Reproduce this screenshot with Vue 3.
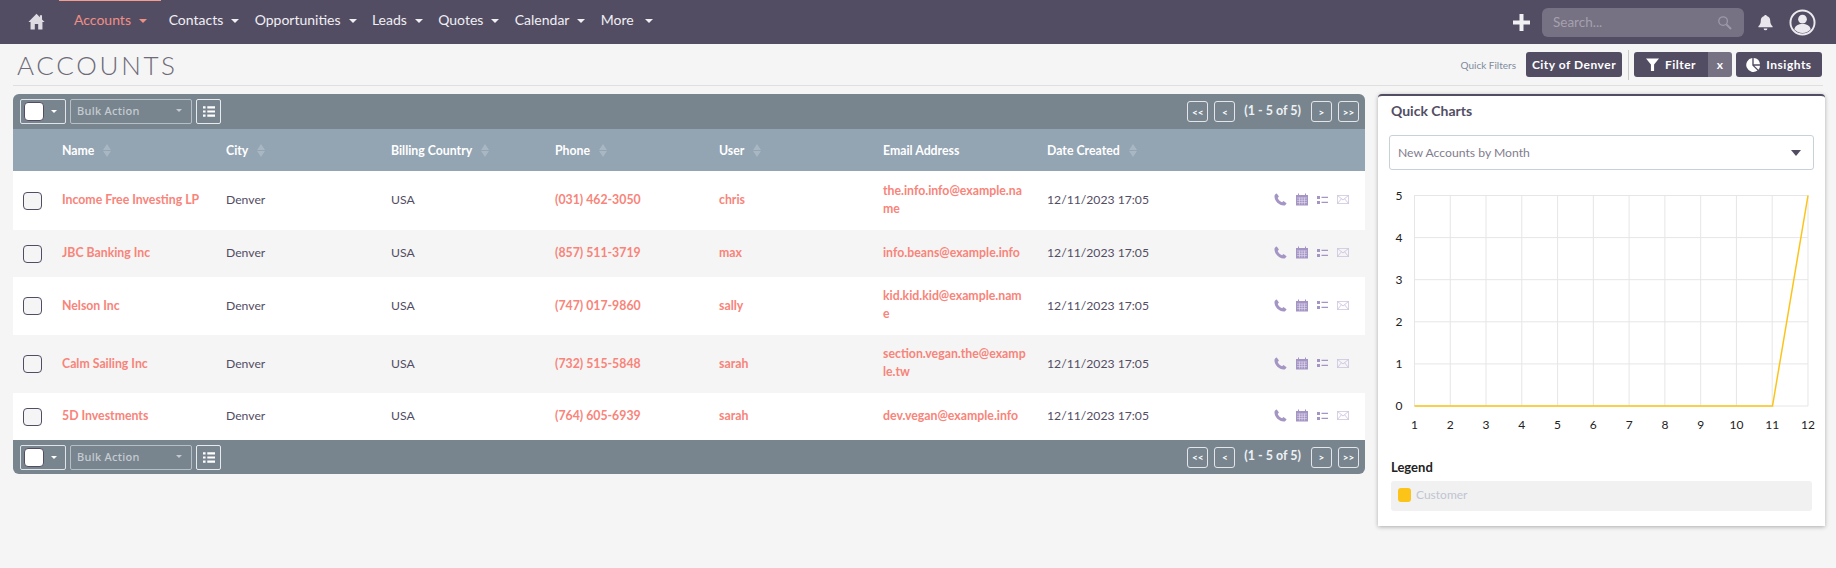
<template>
  <div class="page">
    <nav class="topnav">
      <svg class="home" viewBox="0 0 20 20" width="17" height="17"><path d="M10 1 L14 5 V2.500 H16.500 V7.500 L19.500 10.500 H17 V19.500 H12 V13 H8 V19.500 H3 V10.500 H.5 Z" fill="#dedce2" /></svg>
      <ul class="menu">
        <li v-for="m in menu" :key="m" :class="{ active: m === 'Accounts' }">{{ m }}<i class="caret"></i></li>
      </ul>
      <div class="nav-right">
        <svg viewBox="0 0 17 17" width="17" height="17"><path d="M6.500 0h4v6.500H17v4h-6.500V17h-4v-6.500H0v-4h6.500z" fill="#f0eff2" /></svg>
        <div class="search">
          <span>Search...</span>
          <svg viewBox="0 0 16 16" width="15" height="15"><circle cx="6.500" cy="6.500" r="4.600" fill="none" stroke="#9d99a8" stroke-width="1.400" /><path d="M10 10l5 5" stroke="#9d99a8" stroke-width="2.200" /></svg>
        </div>
        <svg class="bell" viewBox="0 0 18 18" width="17" height="18"><path d="M9 1.500c.8 0 1.300.5 1.400 1.200 2.500.6 3.600 2.600 3.600 5 0 3 1 4.300 2.500 5.800v1H1.500v-1C3 12 4 10.700 4 7.700c0-2.400 1.100-4.400 3.600-5 .1-.7.600-1.200 1.400-1.200zM7 15.800h4a2 2 0 0 1-4 0z" fill="#e8e6ea" /></svg>
        <svg viewBox="0 0 28 28" width="27" height="27"><circle cx="14" cy="14" r="12.500" fill="none" stroke="#eceaee" stroke-width="2" /><circle cx="14" cy="10.500" r="4.500" fill="#eceaee" /><path d="M5.500 21c1-4 4-5.500 8.500-5.500s7.500 1.500 8.500 5.500c-2 2.500-5 4-8.500 4s-6.500-1.500-8.500-4z" fill="#eceaee" /></svg>
      </div>
    </nav>

    <header class="page-head">
      <h1>ACCOUNTS</h1>
      <div class="head-actions">
        <span class="qf-label">Quick Filters</span>
        <button class="dark-btn city">City of Denver</button>
        <span class="vsep"></span>
        <button class="dark-btn filter">
          <svg viewBox="0 0 14 14" width="13" height="13"><path d="M0 .5h14L8.700 7v7H5.300V7z" fill="#fff" /></svg>Filter
        </button>
        <button class="x-btn">x</button>
        <button class="dark-btn insights">
          <svg viewBox="0 0 14 14" width="14" height="14"><path d="M6.300 0v7.400l5.200 5.100A7 7 0 1 1 6.300 0z" fill="#fff" /><path d="M7.700 0A7 7 0 0 1 14 6.300H7.700z" fill="#fff" /><path d="M8.300 7.700H14a7 7 0 0 1-1.500 4.100z" fill="#fff" /></svg>Insights
        </button>
      </div>
    </header>

    <div class="content">
      <section class="list">
        <div class="toolbar top">
          <div class="sel-box"><span class="check-white"></span><i class="caret small"></i></div>
          <div class="bulk">Bulk Action<i class="caret small dim"></i></div>
          <div class="list-btn">
            <svg viewBox="0 0 14 12" width="12" height="11"><path d="M0 0h3v2.600H0zM5 0h9v2.600H5zM0 4.700h3v2.600H0zM5 4.700h9v2.600H5zM0 9.400h3V12H0zM5 9.400h9V12H5z" fill="#fff" /></svg>
          </div>
          <div class="pager">
            <span class="pg">&lt;&lt;</span><span class="pg">&lt;</span>
            <span class="count">(1 - 5 of 5)</span>
            <span class="pg">&gt;</span><span class="pg">&gt;&gt;</span>
          </div>
        </div>

        <table>
          <thead>
            <tr>
              <th class="c-check"></th>
              <th v-for="c in columns" :key="c.label">
                {{ c.label }}
                <span v-if="c.sort" class="sort"><i></i><i></i></span>
              </th>
              <th class="c-icons"></th>
            </tr>
          </thead>
          <tbody>
            <tr v-for="r in rows" :key="r.name" :style="{ height: r.h + 'px' }">
              <td class="c-check"><span class="check"></span></td>
              <td class="link">{{ r.name }}</td>
              <td>Denver</td>
              <td>USA</td>
              <td class="link">{{ r.phone }}</td>
              <td class="link">{{ r.user }}</td>
              <td class="link email">{{ r.email }}</td>
              <td>12/11/2023 17:05</td>
              <td class="c-icons">
                <div class="row-icons">
                  <svg viewBox="0 0 14 14" width="13" height="13"><path d="M3 .5l2.300 3.300-1.300 1.500c.6 1.900 2.500 3.900 4.700 4.700l1.500-1.300 3.300 2.300c-.3 1.300-1.500 2.500-3 2.500C5.500 13.500.5 8.500.5 3.500.5 2 1.700.8 3 .5z" fill="#a595c4" /></svg>
                  <svg viewBox="0 0 12 12" width="12" height="13"><path d="M0 1.500h2V0h1v1.500h6V0h1v1.500h2V12H0z" fill="#a595c4" /><path d="M1 4.500h10M1 6.800h10M1 9.100h10M3.500 4v7M6 4v7M8.500 4v7" stroke="#e4dff0" stroke-width=".6" /></svg>
                  <svg viewBox="0 0 11 8" width="11" height="8"><path d="M0 0h3v3H0zM0 5h3v3H0z" fill="#a595c4" /><path d="M4.500.8H11v1.200H4.500zM4.500 5.800H11v1.200H4.500z" fill="#a595c4" /></svg>
                  <svg viewBox="0 0 12 9" width="12" height="9"><path d="M.4.4h11.200v8.200H.4zM.4.4L6 5l5.600-4.600M.4 8.600l4-4.800M11.600 8.600l-4-4.800" fill="none" stroke="#c8bedd" stroke-width=".8" /></svg>
                </div>
              </td>
            </tr>
          </tbody>
        </table>

        <div class="toolbar bottom">
          <div class="sel-box"><span class="check-white"></span><i class="caret small"></i></div>
          <div class="bulk">Bulk Action<i class="caret small dim"></i></div>
          <div class="list-btn">
            <svg viewBox="0 0 14 12" width="12" height="11"><path d="M0 0h3v2.600H0zM5 0h9v2.600H5zM0 4.700h3v2.600H0zM5 4.700h9v2.600H5zM0 9.400h3V12H0zM5 9.400h9V12H5z" fill="#fff" /></svg>
          </div>
          <div class="pager">
            <span class="pg">&lt;&lt;</span><span class="pg">&lt;</span>
            <span class="count">(1 - 5 of 5)</span>
            <span class="pg">&gt;</span><span class="pg">&gt;&gt;</span>
          </div>
        </div>
      </section>

      <aside class="charts">
        <h3>Quick Charts</h3>
        <div class="chart-select">New Accounts by Month<i class="sel-caret"></i></div>
        <svg class="chart" viewBox="0 0 447 250" width="447" height="250">
          <g stroke="#e6e6e6" stroke-width="1">
            <line v-for="x in gridX" :key="'x' + x" :x1="x" :x2="x" y1="25" y2="236" />
            <line v-for="y in gridY" :key="'y' + y" x1="36.500" x2="430" :y1="y" :y2="y" />
          </g>
          <text v-for="(y, i) in gridY" :key="'l' + y" x="24.500" :y="y + 4" class="tick" text-anchor="end">{{ 5 - i }}</text>
          <text v-for="(x, i) in gridX" :key="'n' + x" :x="x" y="259" class="tick" text-anchor="middle">{{ i + 1 }}</text>
          <polyline fill="none" stroke="#fcc419" stroke-width="1.500" points="36.500,236 394.500,236 430,25.500" />
        </svg>
        <h4>Legend</h4>
        <div class="legend"><span class="swatch"></span><span>Customer</span></div>
      </aside>
    </div>
  </div>
</template>

<script setup>
const menu = ['Accounts', 'Contacts', 'Opportunities', 'Leads', 'Quotes', 'Calendar', 'More']

const columns = [
  { label: 'Name', sort: true },
  { label: 'City', sort: true },
  { label: 'Billing Country', sort: true },
  { label: 'Phone', sort: true },
  { label: 'User', sort: true },
  { label: 'Email Address', sort: false },
  { label: 'Date Created', sort: true }
]

const rows = [
  { name: 'Income Free Investing LP', phone: '(031) 462-3050', user: 'chris', email: 'the.info.info@example.name', h: 59 },
  { name: 'JBC Banking Inc', phone: '(857) 511-3719', user: 'max', email: 'info.beans@example.info', h: 47 },
  { name: 'Nelson Inc', phone: '(747) 017-9860', user: 'sally', email: 'kid.kid.kid@example.name', h: 58 },
  { name: 'Calm Sailing Inc', phone: '(732) 515-5848', user: 'sarah', email: 'section.vegan.the@example.tw', h: 58 },
  { name: '5D Investments', phone: '(764) 605-6939', user: 'sarah', email: 'dev.vegan@example.info', h: 47 }
]

const gridX = Array.from({ length: 12 }, (_, i) => 36.5 + i * 35.77)
const gridY = Array.from({ length: 6 }, (_, i) => 25.5 + i * 42.1)
</script>

<style>
body {
  margin: 0;
  background: #f5f5f5;
}
</style>

<style scoped>
.page {
  font-family: Lato, "Liberation Sans", sans-serif;
  height: 568px;
  overflow: hidden;
  background: #f5f5f5;
  color: #534d64;
}

.topnav {
  height: 44px;
  background: #534d64;
  display: flex;
  align-items: center;
  padding: 0 20px 0 28px;
}

.home {
  margin-right: 14px;
  margin-top: -1px;
}

.menu {
  display: flex;
  list-style: none;
  margin: 0;
  padding: 0;
  height: 44px;
}

.menu li {
  color: #f0eff3;
  font-size: 14px;
  padding: 0 7.7px;
  height: 44px;
  line-height: 38px;
  box-sizing: border-box;
  white-space: nowrap;
  border-top: 1px solid transparent;
}

.menu li.active {
  color: #f08f84;
  border-top-color: #f59b90;
  padding: 0 14px 0 15px;
}

.caret {
  display: inline-block;
  width: 0;
  height: 0;
  border-left: 4px solid transparent;
  border-right: 4px solid transparent;
  border-top: 4px solid currentColor;
  margin-left: 8px;
  vertical-align: 2px;
}

.menu li:last-child .caret {
  margin-left: 11px;
}

.nav-right {
  margin-left: auto;
  display: flex;
  align-items: center;
}

.search {
  width: 202px;
  height: 29px;
  border-radius: 6px;
  background: #767183;
  margin: 0 13px 0 12px;
  padding: 0 12px 0 11px;
  box-sizing: border-box;
  display: flex;
  align-items: center;
  justify-content: space-between;
  color: #a5a1ae;
  font-size: 13.5px;
}

.bell {
  margin-right: 15px;
}

.page-head {
  height: 42px;
  box-sizing: border-box;
  margin: 0 13px;
  border-bottom: 1px solid #dfdfdf;
  display: flex;
  align-items: center;
  justify-content: space-between;
}

h1 {
  margin: 0 0 0 4px;
  font-size: 26px;
  font-weight: 300;
  letter-spacing: 2.700px;
  color: #6e6a78;
}

.head-actions {
  display: flex;
  align-items: center;
  padding-right: 1px;
}

.qf-label {
  font-size: 10px;
  color: #7e8a9c;
  margin-right: 10px;
}

.dark-btn {
  height: 25px;
  border: 0;
  border-radius: 3px;
  background: #534d64;
  color: #fff;
  font-family: inherit;
  font-size: 12px;
  font-weight: 700;
  letter-spacing: .5px;
  padding: 0;
  display: flex;
  align-items: center;
  justify-content: center;
  gap: 6px;
}

.city {
  width: 96px;
}

.vsep {
  width: 1px;
  height: 30px;
  background: #c9c9c9;
  margin: 0 5px 0 6px;
}

.filter {
  width: 74px;
  border-radius: 3px 0 0 3px;
}

.x-btn {
  height: 25px;
  width: 24px;
  border: 0;
  border-radius: 0 3px 3px 0;
  background: #767183;
  color: #fff;
  font-family: inherit;
  font-size: 12px;
  font-weight: 700;
  padding: 0;
  margin-right: 4px;
}

.insights {
  width: 86px;
}

.content {
  display: flex;
  padding: 8px 11px 0 13px;
  gap: 13px;
  align-items: flex-start;
}

.list {
  width: 1352px;
  flex: none;
}

.toolbar {
  background: #78858f;
  display: flex;
  align-items: center;
  padding-left: 7px;
  box-sizing: border-box;
}

.toolbar.top {
  height: 35px;
  border-radius: 6px 6px 0 0;
}

.toolbar.bottom {
  height: 34px;
  border-radius: 0 0 6px 6px;
}

.sel-box {
  width: 46px;
  height: 25px;
  box-sizing: border-box;
  border: 1px solid #dfe4e8;
  border-radius: 2px;
  display: flex;
  align-items: center;
  padding-left: 3px;
  color: #fff;
}

.check-white {
  width: 18px;
  height: 17px;
  background: #fff;
  border: 1px solid #534d64;
  border-radius: 4px;
  box-sizing: content-box;
}

.caret.small {
  margin-left: 7px;
  border-left-width: 3.5px;
  border-right-width: 3.5px;
  border-top-width: 3.5px;
  vertical-align: 0;
}

.caret.dim {
  margin-left: auto;
  color: #c3cad0;
}

.bulk {
  width: 122px;
  height: 25px;
  box-sizing: border-box;
  border: 1px solid #b6bfc6;
  margin-left: 4px;
  border-radius: 2px;
  display: flex;
  align-items: center;
  padding: 0 9px 2px 6px;
  font-family: "Noto Sans", Lato, sans-serif;
  font-size: 11px;
  font-weight: 500;
  letter-spacing: .3px;
  color: #c6ccd1;
}

.list-btn {
  width: 25px;
  height: 25px;
  box-sizing: border-box;
  border: 1px solid #e6eaed;
  border-radius: 2px;
  margin-left: 4px;
  display: flex;
  align-items: center;
  justify-content: center;
}

.pager {
  margin-left: auto;
  display: flex;
  align-items: center;
  padding-right: 6px;
  color: #fff;
}

.pg {
  width: 21px;
  height: 21px;
  border: 1px solid #e2e6e9;
  border-radius: 3px;
  box-sizing: border-box;
  margin-left: 6px;
  font-size: 10px;
  font-weight: 700;
  display: flex;
  align-items: center;
  justify-content: center;
  line-height: 1;
}

.count {
  font-size: 12.5px;
  font-weight: 700;
  margin: -3px 4px 0 9px;
  color: #eef1f3;
}

table {
  width: 100%;
  border-collapse: collapse;
  table-layout: fixed;
}

thead tr {
  height: 42px;
  background: #93a4b3;
}

th {
  width: 164px;
  padding: 0;
  text-align: left;
  color: #fff;
  font-size: 12.3px;
  font-weight: 700;
  white-space: nowrap;
}

th.c-check,
td.c-check {
  width: 49px;
}

th:nth-child(2) {
  width: 164px;
}

th:nth-child(3) {
  width: 165px;
}

th.c-icons {
  width: 154px;
}

.sort {
  display: inline-block;
  margin-left: 6px;
  vertical-align: -2px;
}

.sort i {
  display: block;
  width: 0;
  height: 0;
  border-left: 4.5px solid transparent;
  border-right: 4.5px solid transparent;
}

.sort i:first-child {
  border-bottom: 6px solid #a9b7c3;
  margin-bottom: 1px;
}

.sort i:last-child {
  border-top: 6px solid #a9b7c3;
}

tbody tr:nth-child(odd) {
  background: #fff;
}

tbody tr:nth-child(even) {
  background: #f5f5f5;
}

td {
  padding: 0 14px 2px 0;
  box-sizing: border-box;
  font-size: 12.2px;
  color: #534d64;
}

td.c-check {
  padding: 0 0 0 10px;
}

.check {
  display: block;
  width: 19px;
  height: 18px;
  box-sizing: border-box;
  border: 1.5px solid #534d64;
  border-radius: 4px;
  background: #f5f5f5;
}

.link {
  color: #f8847a;
  font-size: 12.3px;
  font-weight: 700;
}

.email {
  word-break: break-all;
  line-height: 18px;
  padding-right: 19px;
}

.row-icons {
  display: flex;
  align-items: center;
  justify-content: flex-end;
  gap: 9px;
  padding-right: 2px;
}

.charts {
  width: 447px;
  height: 432px;
  box-sizing: border-box;
  flex: none;
  background: #fff;
  border-top: 2px solid #534d64;
  border-radius: 4px 4px 0 0;
  box-shadow: 0 1px 4px rgba(0, 0, 0, .3);
  padding: 0 13px;
}

h3 {
  margin: 6px 0 16px;
  font-size: 14px;
  font-weight: 700;
  line-height: 17px;
  color: #534d64;
}

.chart-select {
  height: 35px;
  box-sizing: border-box;
  margin: 0 -2px;
  border: 1px solid #c8d0d8;
  border-radius: 3px;
  font-size: 12.2px;
  color: #827d8e;
  display: flex;
  align-items: center;
  justify-content: space-between;
  padding: 0 12px 0 8px;
}

.sel-caret {
  width: 0;
  height: 0;
  border-left: 5px solid transparent;
  border-right: 5px solid transparent;
  border-top: 6px solid #534d64;
}

.chart {
  display: block;
  margin: 0 0 0 -13px;
  overflow: visible;
}

.tick {
  font-size: 12px;
  fill: #222;
}

h4 {
  margin: 39px 0 5px;
  font-size: 13px;
  font-weight: 700;
  line-height: 17px;
  color: #222;
}

.legend {
  height: 30px;
  background: #f1f1f1;
  border-radius: 3px;
  padding: 7px 7px 0;
  box-sizing: border-box;
  display: flex;
  gap: 5px;
  font-size: 12px;
  color: #c0c5d2;
  line-height: 13px;
}

.swatch {
  width: 13px;
  height: 14px;
  border-radius: 3px;
  background: #fcc419;
}
</style>
